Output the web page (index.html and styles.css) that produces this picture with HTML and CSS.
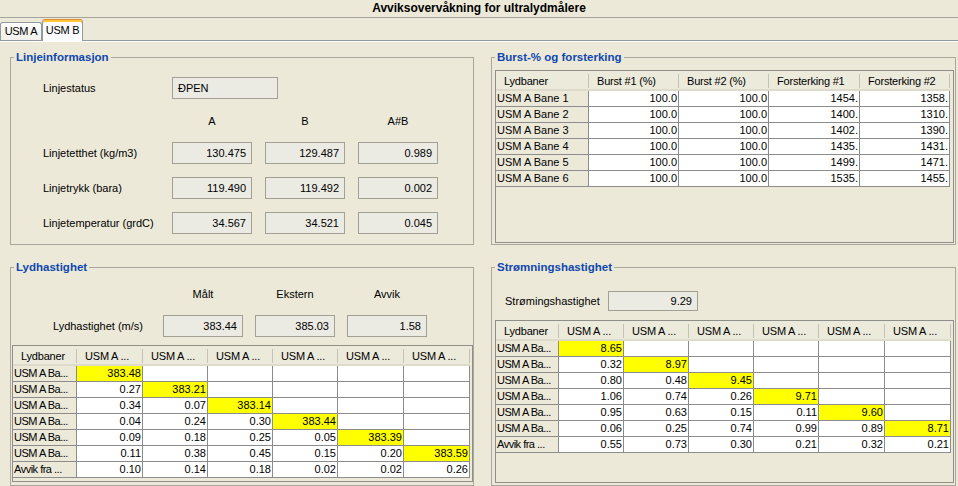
FILE: index.html
```html
<!DOCTYPE html>
<html lang="no">
<head>
<meta charset="utf-8">
<title>Avviksovervåkning for ultralydmålere</title>
<link rel="stylesheet" href="styles.css">
</head>
<body>
<header class="titlebar">Avviksovervåkning for ultralydmålere</header>
<nav class="tabs">
  <div class="tab">USM A</div>
  <div class="tab active">USM B</div>
</nav>
<main class="tabpanel">
  <section class="panel">
    <h2 class="panel-title">Linjeinformasjon</h2>
    <div class="info-grid">
      <span class="lbl">Linjestatus</span>
      <div class="field status">ÐPEN</div>
      <span></span>
      <span class="colhead">A</span>
      <span class="colhead">B</span>
      <span class="colhead">A#B</span>
      <span class="lbl">Linjetetthet (kg/m3)</span>
      <div class="field">130.475</div>
      <div class="field">129.487</div>
      <div class="field">0.989</div>
      <span class="lbl">Linjetrykk (bara)</span>
      <div class="field">119.490</div>
      <div class="field">119.492</div>
      <div class="field">0.002</div>
      <span class="lbl">Linjetemperatur (grdC)</span>
      <div class="field">34.567</div>
      <div class="field">34.521</div>
      <div class="field">0.045</div>
    </div>
  </section>

  <section class="panel">
    <h2 class="panel-title">Burst-% og forsterking</h2>
    <div class="scroll burst-scroll">
      <table class="grid burst">
        <colgroup><col class="w93"><col class="w90"><col class="w90"><col class="w91"><col class="w90"></colgroup>
        <thead>
          <tr><th>Lydbaner</th><th>Burst #1 (%)</th><th>Burst #2 (%)</th><th>Forsterking #1</th><th>Forsterking #2</th></tr>
        </thead>
        <tbody>
          <tr><td class="rh">USM A Bane 1</td><td>100.0</td><td>100.0</td><td>1454.</td><td>1358.</td></tr>
          <tr><td class="rh">USM A Bane 2</td><td>100.0</td><td>100.0</td><td>1400.</td><td>1310.</td></tr>
          <tr><td class="rh">USM A Bane 3</td><td>100.0</td><td>100.0</td><td>1402.</td><td>1390.</td></tr>
          <tr><td class="rh">USM A Bane 4</td><td>100.0</td><td>100.0</td><td>1435.</td><td>1431.</td></tr>
          <tr><td class="rh">USM A Bane 5</td><td>100.0</td><td>100.0</td><td>1499.</td><td>1471.</td></tr>
          <tr><td class="rh">USM A Bane 6</td><td>100.0</td><td>100.0</td><td>1535.</td><td>1455.</td></tr>
        </tbody>
      </table>
    </div>
  </section>

  <section class="panel">
    <h2 class="panel-title">Lydhastighet</h2>
    <div class="speed-grid">
      <span></span>
      <span class="colhead">Målt</span>
      <span class="colhead">Ekstern</span>
      <span class="colhead">Avvik</span>
      <span class="lbl right">Lydhastighet (m/s)</span>
      <div class="field">383.44</div>
      <div class="field">385.03</div>
      <div class="field">1.58</div>
    </div>
    <div class="scroll speed-scroll">
      <table class="grid matrix m-speed">
        <colgroup><col class="w64"><col class="w66"><col class="w65"><col class="w65"><col class="w65"><col class="w66"><col class="w66"></colgroup>
        <thead>
          <tr><th>Lydbaner</th><th>USM A ...</th><th>USM A ...</th><th>USM A ...</th><th>USM A ...</th><th>USM A ...</th><th>USM A ...</th></tr>
        </thead>
        <tbody>
          <tr><td class="rh">USM A Ba...</td><td class="hl">383.48</td><td></td><td></td><td></td><td></td><td></td></tr>
          <tr><td class="rh">USM A Ba...</td><td>0.27</td><td class="hl">383.21</td><td></td><td></td><td></td><td></td></tr>
          <tr><td class="rh">USM A Ba...</td><td>0.34</td><td>0.07</td><td class="hl">383.14</td><td></td><td></td><td></td></tr>
          <tr><td class="rh">USM A Ba...</td><td>0.04</td><td>0.24</td><td>0.30</td><td class="hl">383.44</td><td></td><td></td></tr>
          <tr><td class="rh">USM A Ba...</td><td>0.09</td><td>0.18</td><td>0.25</td><td>0.05</td><td class="hl">383.39</td><td></td></tr>
          <tr><td class="rh">USM A Ba...</td><td>0.11</td><td>0.38</td><td>0.45</td><td>0.15</td><td>0.20</td><td class="hl">383.59</td></tr>
          <tr><td class="rh">Avvik fra ...</td><td>0.10</td><td>0.14</td><td>0.18</td><td>0.02</td><td>0.02</td><td>0.26</td></tr>
        </tbody>
      </table>
    </div>
  </section>

  <section class="panel">
    <h2 class="panel-title">Strømningshastighet</h2>
    <div class="flow-row">
      <span class="lbl">Strømingshastighet</span>
      <div class="field small">9.29</div>
    </div>
    <div class="scroll flow-scroll">
      <table class="grid matrix m-flow">
        <colgroup><col class="w63"><col class="w65"><col class="w65"><col class="w65"><col class="w65"><col class="w66"><col class="w66"></colgroup>
        <thead>
          <tr><th>Lydbaner</th><th>USM A ...</th><th>USM A ...</th><th>USM A ...</th><th>USM A ...</th><th>USM A ...</th><th>USM A ...</th></tr>
        </thead>
        <tbody>
          <tr><td class="rh">USM A Ba...</td><td class="hl">8.65</td><td></td><td></td><td></td><td></td><td></td></tr>
          <tr><td class="rh">USM A Ba...</td><td>0.32</td><td class="hl">8.97</td><td></td><td></td><td></td><td></td></tr>
          <tr><td class="rh">USM A Ba...</td><td>0.80</td><td>0.48</td><td class="hl">9.45</td><td></td><td></td><td></td></tr>
          <tr><td class="rh">USM A Ba...</td><td>1.06</td><td>0.74</td><td>0.26</td><td class="hl">9.71</td><td></td><td></td></tr>
          <tr><td class="rh">USM A Ba...</td><td>0.95</td><td>0.63</td><td>0.15</td><td>0.11</td><td class="hl">9.60</td><td></td></tr>
          <tr><td class="rh">USM A Ba...</td><td>0.06</td><td>0.25</td><td>0.74</td><td>0.99</td><td>0.89</td><td class="hl">8.71</td></tr>
          <tr><td class="rh">Avvik fra ...</td><td>0.55</td><td>0.73</td><td>0.30</td><td>0.21</td><td>0.32</td><td>0.21</td></tr>
        </tbody>
      </table>
    </div>
  </section>
</main>
</body>
</html>
```

FILE: styles.css
```css
* { box-sizing: border-box; }
html, body { margin: 0; padding: 0; }
body {
  width: 958px;
  height: 486px;
  overflow: hidden;
  background: #ece9d8;
  font-family: "Liberation Sans", Arial, sans-serif;
  font-size: 11px;
  color: #000;
}

/* title bar */
.titlebar {
  height: 18px;
  border-bottom: 1px solid #a5a49c;
  text-align: center;
  font-weight: bold;
  font-size: 12px;
  line-height: 17px;
}

/* tabs */
.tabs {
  height: 23px;
  border-bottom: 1px solid #919b9c;
  display: flex;
  align-items: flex-end;
}
.tab {
  width: 42px;
  height: 18px;
  border: 1px solid #919b9c;
  border-bottom: 0;
  border-radius: 3px 3px 0 0;
  background: linear-gradient(#fefefe, #f1f0ea);
  text-align: center;
  line-height: 16px;
  letter-spacing: -0.3px;
}
.tab.active {
  width: 41px;
  height: 22px;
  margin-bottom: -1px;
  background: #fcfcfe;
  border-top: 1px solid #e68b2c;
  box-shadow: inset 0 2px 0 #ffc73c;
  padding-top: 2px;
}

/* content */
.tabpanel {
  border-top: 1px solid #fff;
  padding: 15px 0 0 10px;
  display: grid;
  grid-template-columns: 464px 465px;
  grid-template-rows: 188px 219px;
  column-gap: 17px;
  row-gap: 22px;
}
.panel {
  position: relative;
  border: 1px solid #aaa89c;
}
.panel-title {
  position: absolute;
  top: -8px;
  left: 3px;
  margin: 0;
  padding: 0 2px;
  background: #ece9d8;
  color: #0f47af;
  font-size: 11.5px;
  font-weight: bold;
  line-height: 14px;
}

.lbl { align-self: center; white-space: nowrap; }
.lbl.right { text-align: right; padding-right: 8px; }
.colhead { align-self: center; text-align: center; }

.field {
  height: 22px;
  border: 1px solid #a2a092;
  background: #ebeae3;
  line-height: 20px;
  padding: 0 5px;
  text-align: right;
  white-space: nowrap;
}
.field.status {
  grid-column: 2 / -1;
  justify-self: start;
  width: 106px;
  text-align: left;
}
.field.small { height: 20px; line-height: 18px; }

.info-grid {
  display: grid;
  grid-template-columns: 116px 80px 80px 80px;
  grid-template-rows: 22px 17px 22px 22px 22px;
  column-gap: 13px;
  row-gap: 13px;
  padding: 19px 0 0 32px;
}

.speed-grid {
  display: grid;
  grid-template-columns: 140px 80px 80px 80px;
  grid-template-rows: 16px 22px;
  column-gap: 12px;
  row-gap: 13px;
  padding-top: 18px;
}

.flow-row {
  display: grid;
  grid-template-columns: 103px 90px;
  align-items: center;
  padding: 23px 0 0 13px;
}

/* scroll panes */
.scroll {
  border: 1px solid #8f8f8a;
  background: #ece9d8;
  overflow: hidden;
}
.burst-scroll { margin: 12px 0 0 3px; width: 459px; height: 173px; }
.speed-scroll { margin: 8px 0 0 1px; width: 461px; height: 137px; }
.flow-scroll { margin: 9px 0 0 3px; width: 459px; height: 163px; }

/* tables */
.grid {
  table-layout: fixed;
  border-collapse: separate;
  border-spacing: 0;
  font-size: 11px;
}
.burst { width: 454px; }
.m-speed { width: 457px; }
.m-flow { width: 455px; }

.w63 { width: 63px; }
.w64 { width: 64px; }
.w65 { width: 65px; }
.w66 { width: 66px; }
.w90 { width: 90px; }
.w91 { width: 91px; }
.w93 { width: 93px; }

.grid th {
  height: 20px;
  padding: 0 0 0 8px;
  font-weight: normal;
  text-align: left;
  white-space: nowrap;
  overflow: hidden;
  letter-spacing: -0.2px;
  background:
    linear-gradient(#c5c2b2, #c5c2b2) right 3px / 1px 14px no-repeat,
    #ebeadb;
  box-shadow: inset 0 -2px 0 #dedbcc;
}
.grid td {
  height: 16px;
  padding: 0 1px;
  line-height: 15px;
  border-right: 1px solid #8c8c8c;
  border-bottom: 1px solid #8c8c8c;
  background: #fff;
  text-align: right;
  white-space: nowrap;
  overflow: hidden;
}
.grid td.rh {
  background: #ece9d8;
  text-align: left;
}
.matrix td.rh { letter-spacing: -0.5px; }
.grid td.hl { background: #ffff00; }
```
